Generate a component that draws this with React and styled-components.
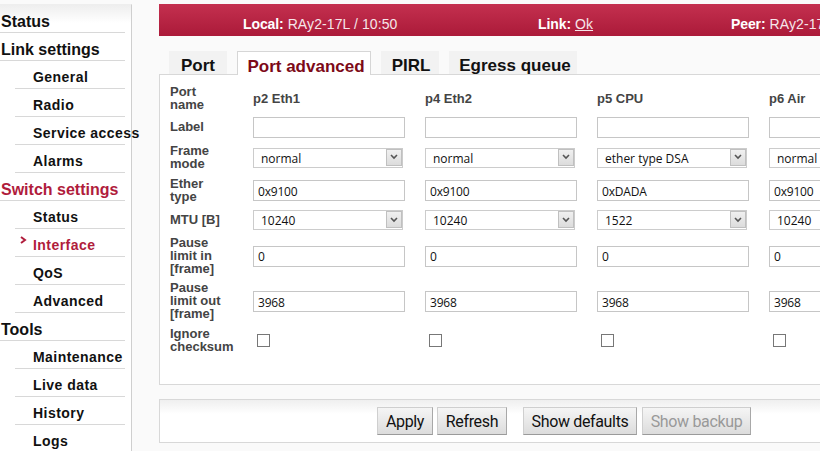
import React from "react"
import styled, { createGlobalStyle } from "styled-components"

const GlobalStyle = createGlobalStyle`
  html, body {
    margin: 0;
    height: 100%;
    overflow: hidden;
    background: #fafafa;
    font-family: "Liberation Sans", Arial, sans-serif;
  }
`

const Page = styled.div`
  width: 820px;
  height: 451px;
  display: flex;
  overflow: hidden;
`

const Sidebar = styled.nav`
  width: 132px;
  height: 447px;
  flex: none;
  margin-top: 4px;
  padding-right: 6px;
  box-sizing: border-box;
  background: linear-gradient(#eeeeee, #ffffff 18px);
  border-right: 1px solid #cfcfcf;
  border-top: 1px solid #eeeeee;
`

const MenuHead = styled.div`
  height: 28px;
  box-sizing: border-box;
  padding: 8px 0 0 1px;
  font-size: 16px;
  line-height: 18px;
  font-weight: bold;
  color: ${props => (props.active ? "#b01c3c" : "#111")};
  border-bottom: 1px solid #d8d8d8;
  white-space: nowrap;
`

const MenuItem = styled.div`
  position: relative;
  height: 28px;
  box-sizing: border-box;
  margin-left: 15px;
  padding: 7px 0 0 18px;
  font-size: 14px;
  line-height: 18px;
  font-weight: bold;
  letter-spacing: 0.45px;
  color: ${props => (props.active ? "#b01c3c" : "#111")};
  border-bottom: 1px solid #d8d8d8;
  white-space: nowrap;
`

const MenuMark = styled.svg`
  position: absolute;
  left: 5px;
  top: 7px;
  width: 7px;
  height: 8px;
`

const Main = styled.main`
  flex: none;
  width: 661px;
  margin-left: 27px;
  padding-top: 4px;
`

const Banner = styled.header`
  height: 32px;
  box-sizing: border-box;
  padding: 11px 0 0 84px;
  display: flex;
  white-space: nowrap;
  font-size: 14px;
  line-height: 18px;
  letter-spacing: 0.1px;
  color: #f6e6ea;
  background: linear-gradient(#c4304f, #ab1a39);
`

const BannerItem = styled.div`
  flex: none;
  width: ${props => props.width}px;

  b {
    color: #fff;
    letter-spacing: -0.1px;
  }

  u {
    text-decoration: underline;
  }
`

const Tabs = styled.div`
  display: flex;
  gap: 10px;
  height: 23px;
  margin-top: 15px;
  padding-left: 10px;
`

const Tab = styled.div`
  height: ${props => (props.active ? "24px" : "23px")};
  box-sizing: border-box;
  padding: 5px 0 0 ${props => props.shift || 0}px;
  width: ${props => props.width}px;
  text-align: center;
  font-size: 17px;
  line-height: 19px;
  font-weight: bold;
  white-space: nowrap;
  position: relative;
  z-index: 1;
  color: ${props => (props.active ? "#7d0a18" : "#111")};
  background: ${props => (props.active ? "#fff" : "#f2f2f2")};
  border: ${props => (props.active ? "1px solid #d6d6d6" : "0")};
  border-bottom: 0;
`

const Panel = styled.section`
  height: 311px;
  box-sizing: border-box;
  background: #fff;
  border: 1px solid #d8d8d8;
  border-right: 0;
  padding: 7px 0 0 10px;
  overflow: hidden;
`

const PortGrid = styled.div`
  display: grid;
  grid-template-columns: 83px repeat(4, 172px);
  grid-template-rows: 33px 25px 35px 31px 28px 44px 47px 31px;
  align-items: center;
  width: 771px;
`

const RowLabel = styled.div`
  padding-bottom: 2px;
  font-size: 13px;
  line-height: 13px;
  font-weight: bold;
  color: #444;
`

const PortName = styled.div`
  font-size: 13px;
  font-weight: bold;
  color: #444;
`

const TextField = styled.input`
  display: block;
  width: 152px;
  height: 21px;
  box-sizing: border-box;
  border: 1px solid #c6c6c6;
  background: #fff;
  padding: 1px 4px 0;
  font-family: "Open Sans", sans-serif;
  font-size: 12px;
  letter-spacing: -0.2px;
  color: #111;
  outline: none;
`

const SelectWrap = styled.div`
  position: relative;
  width: 150px;
  height: 20px;
`

const SelectField = styled.select`
  appearance: none;
  display: block;
  width: 100%;
  height: 100%;
  box-sizing: border-box;
  border: 1px solid #cccccc;
  border-radius: 0;
  background: #fff;
  padding: 1px 0 0 7px;
  font-family: "Open Sans", sans-serif;
  font-size: 12px;
  color: #111;
  outline: none;
`

const SelectArrow = styled.span`
  position: absolute;
  top: 1px;
  right: 1px;
  width: 16px;
  height: 17px;
  box-sizing: border-box;
  border: 1px solid #c0c0c0;
  background: linear-gradient(#f0f0f0, #dcdcdc);
  display: flex;
  align-items: center;
  justify-content: center;
  pointer-events: none;
`

const CheckBox = styled.input`
  appearance: none;
  display: block;
  width: 13px;
  height: 13px;
  margin: 0 0 0 4px;
  box-sizing: border-box;
  border: 1px solid #777;
  background: #fff;
`

const ActionBar = styled.section`
  display: flex;
  height: 44px;
  margin-top: 14px;
  box-sizing: border-box;
  border: 1px solid #d8d8d8;
  border-right: 0;
  padding: 7px 0 0 217px;
  background: linear-gradient(#efefef, #ffffff 14px);
`

const ActionButton = styled.button`
  width: ${props => props.width}px;
  height: 28px;
  box-sizing: border-box;
  margin-right: ${props => props.gap}px;
  padding: 0;
  border: 1px solid #cfcfcf;
  border-bottom-color: #9a9a9a;
  border-right-color: #a8a8a8;
  background: linear-gradient(#f5f5f5, #dcdcdc);
  font-family: Roboto, sans-serif;
  font-size: 16px;
  letter-spacing: -0.35px;
  color: ${props => (props.disabled ? "#999" : "#111")};
  white-space: nowrap;
`

const ports = [
  { name: "p2 Eth1", mode: "normal", ether: "0x9100", mtu: "10240", pauseIn: "0", pauseOut: "3968" },
  { name: "p4 Eth2", mode: "normal", ether: "0x9100", mtu: "10240", pauseIn: "0", pauseOut: "3968" },
  { name: "p5 CPU", mode: "ether type DSA", ether: "0xDADA", mtu: "1522", pauseIn: "0", pauseOut: "3968" },
  { name: "p6 Air", mode: "normal", ether: "0x9100", mtu: "10240", pauseIn: "0", pauseOut: "3968" },
]

function Dropdown({ value }) {
  return (
    <SelectWrap>
      <SelectField defaultValue={value}>
        <option>{value}</option>
      </SelectField>
      <SelectArrow>
        <svg width="8" height="6" viewBox="0 0 8 6">
          <path d="M1 1l3 3 3-3" fill="none" stroke="#555" strokeWidth="1.6" />
        </svg>
      </SelectArrow>
    </SelectWrap>
  )
}

const rows = [
  { label: <>Port<br />name</>, cell: p => <PortName>{p.name}</PortName> },
  { label: "Label", cell: () => <TextField type="text" defaultValue="" /> },
  { label: <>Frame<br />mode</>, cell: p => <Dropdown value={p.mode} /> },
  { label: <>Ether<br />type</>, cell: p => <TextField type="text" defaultValue={p.ether} /> },
  { label: "MTU [B]", cell: p => <Dropdown value={p.mtu} /> },
  { label: <>Pause<br />limit in<br />[frame]</>, cell: p => <TextField type="text" defaultValue={p.pauseIn} /> },
  { label: <>Pause<br />limit out<br />[frame]</>, cell: p => <TextField type="text" defaultValue={p.pauseOut} /> },
  { label: <>Ignore<br />checksum</>, cell: () => <CheckBox type="checkbox" /> },
]

export default function App() {
  return (
    <Page>
      <GlobalStyle />
      <Sidebar>
        <MenuHead>Status</MenuHead>
        <MenuHead>Link settings</MenuHead>
        <MenuItem>General</MenuItem>
        <MenuItem>Radio</MenuItem>
        <MenuItem>Service access</MenuItem>
        <MenuItem>Alarms</MenuItem>
        <MenuHead active>Switch settings</MenuHead>
        <MenuItem>Status</MenuItem>
        <MenuItem active>
          <MenuMark viewBox="0 0 7 8">
            <path d="M1 1l4 3-4 3" fill="none" stroke="#b01c3c" strokeWidth="2" />
          </MenuMark>
          Interface
        </MenuItem>
        <MenuItem>QoS</MenuItem>
        <MenuItem>Advanced</MenuItem>
        <MenuHead>Tools</MenuHead>
        <MenuItem>Maintenance</MenuItem>
        <MenuItem>Live data</MenuItem>
        <MenuItem>History</MenuItem>
        <MenuItem>Logs</MenuItem>
      </Sidebar>
      <Main>
        <Banner>
          <BannerItem width={295}><b>Local:</b> RAy2-17L / 10:50</BannerItem>
          <BannerItem width={193}><b>Link:</b> <u>Ok</u></BannerItem>
          <BannerItem width={120}><b>Peer:</b> RAy2-17R / 10:50</BannerItem>
        </Banner>
        <Tabs>
          <Tab width={58}>Port</Tab>
          <Tab active width={134} shift={4}>Port advanced</Tab>
          <Tab width={58} shift={2}>PIRL</Tab>
          <Tab width={128} shift={4}>Egress queue</Tab>
        </Tabs>
        <Panel>
          <PortGrid>
            {rows.map((row, i) => (
              <React.Fragment key={i}>
                <RowLabel>{row.label}</RowLabel>
                {ports.map(p => (
                  <div key={p.name}>{row.cell(p)}</div>
                ))}
              </React.Fragment>
            ))}
          </PortGrid>
        </Panel>
        <ActionBar>
          <ActionButton width={56} gap={4}>Apply</ActionButton>
          <ActionButton width={70} gap={16}>Refresh</ActionButton>
          <ActionButton width={114} gap={5}>Show defaults</ActionButton>
          <ActionButton width={109} disabled gap={0}>Show backup</ActionButton>
        </ActionBar>
      </Main>
    </Page>
  )
}
